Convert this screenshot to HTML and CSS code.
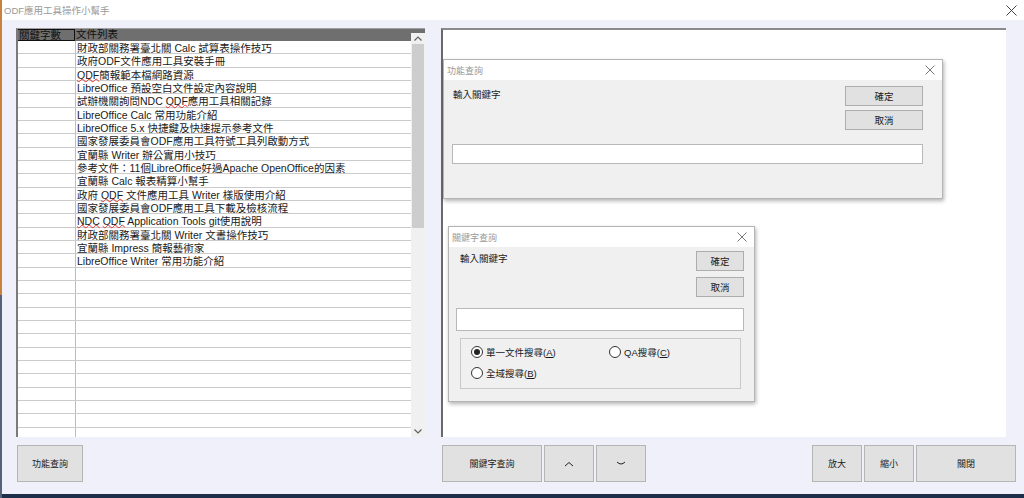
FILE: index.html
```html
<!DOCTYPE html>
<html>
	<head>
		<meta charset="utf-8">
		<title>ODF應用工具操作小幫手</title>
		<link rel="stylesheet" href="styles.css">
	</head>
	<body>
	<div class="app">
		<div class="titlebar">
			<span class="apptitle">ODF應用工具操作小幫手</span>
			<svg class="close" width="11" height="11" viewBox="0 0 11 11"><path d="M0.5 0.5 L10.5 10.5 M10.5 0.5 L0.5 10.5" stroke="#444" stroke-width="1"/></svg>
		</div>
		<div class="main">
			<div class="grid">
				<div class="rows">
					<div class="row head"><div class="c1">關鍵字數</div><div class="c2">文件列表</div></div>
					<div class="row"><div class="c1"></div><div class="c2">財政部關務署臺北關 Calc 試算表操作技巧</div></div>
					<div class="row"><div class="c1"></div><div class="c2">政府ODF文件應用工具安裝手冊</div></div>
					<div class="row"><div class="c1"></div><div class="c2"><u>ODF</u>簡報範本檔網路資源</div></div>
					<div class="row"><div class="c1"></div><div class="c2">LibreOffice 預設空白文件設定內容說明</div></div>
					<div class="row"><div class="c1"></div><div class="c2">試辦機關詢問NDC <u>ODF</u>應用工具相關記錄</div></div>
					<div class="row"><div class="c1"></div><div class="c2">LibreOffice Calc 常用功能介紹</div></div>
					<div class="row"><div class="c1"></div><div class="c2">LibreOffice 5.x 快捷鍵及快速提示參考文件</div></div>
					<div class="row"><div class="c1"></div><div class="c2">國家發展委員會ODF應用工具符號工具列啟動方式</div></div>
					<div class="row"><div class="c1"></div><div class="c2">宜蘭縣 Writer 辦公實用小技巧</div></div>
					<div class="row"><div class="c1"></div><div class="c2">參考文件：11個LibreOffice好過Apache OpenOffice的因素</div></div>
					<div class="row"><div class="c1"></div><div class="c2">宜蘭縣 Calc 報表精算小幫手</div></div>
					<div class="row"><div class="c1"></div><div class="c2">政府 <u>ODF</u> 文件應用工具 Writer 樣版使用介紹</div></div>
					<div class="row"><div class="c1"></div><div class="c2">國家發展委員會ODF應用工具下載及檢核流程</div></div>
					<div class="row"><div class="c1"></div><div class="c2"><u>NDC</u> <u>ODF</u> Application Tools git使用說明</div></div>
					<div class="row"><div class="c1"></div><div class="c2">財政部關務署臺北關 Writer 文書操作技巧</div></div>
					<div class="row"><div class="c1"></div><div class="c2">宜蘭縣 Impress 簡報藝術家</div></div>
					<div class="row"><div class="c1"></div><div class="c2">LibreOffice Writer 常用功能介紹</div></div>
					<div class="row"><div class="c1"></div><div class="c2"></div></div>
					<div class="row"><div class="c1"></div><div class="c2"></div></div>
					<div class="row"><div class="c1"></div><div class="c2"></div></div>
					<div class="row"><div class="c1"></div><div class="c2"></div></div>
					<div class="row"><div class="c1"></div><div class="c2"></div></div>
					<div class="row"><div class="c1"></div><div class="c2"></div></div>
					<div class="row"><div class="c1"></div><div class="c2"></div></div>
					<div class="row"><div class="c1"></div><div class="c2"></div></div>
					<div class="row"><div class="c1"></div><div class="c2"></div></div>
					<div class="row"><div class="c1"></div><div class="c2"></div></div>
					<div class="row"><div class="c1"></div><div class="c2"></div></div>
					<div class="row"><div class="c1"></div><div class="c2"></div></div>
					<div class="row"><div class="c1"></div><div class="c2"></div></div>
				</div>
				<div class="scroll">
					<div class="sbtop"></div>
					<div class="arrow">
						<svg width="8" height="5" viewBox="0 0 8 5"><path d="M0.5 4.5 L4 1 L7.5 4.5" fill="none" stroke="#606060" stroke-width="1.2"/></svg>
					</div>
					<div class="thumb"></div>
					<div class="track"></div>
					<div class="arrow">
						<svg width="8" height="5" viewBox="0 0 8 5"><path d="M0.5 0.5 L4 4 L7.5 0.5" fill="none" stroke="#606060" stroke-width="1.2"/></svg>
					</div>
				</div>
			</div>
			<div class="viewer"></div>

			<div class="dialog dlg1">
				<div class="dtitle"><span>功能查詢</span>
					<svg width="10" height="10" viewBox="0 0 10 10"><path d="M0.5 0.5 L9.5 9.5 M9.5 0.5 L0.5 9.5" stroke="#777" stroke-width="1"/></svg>
				</div>
				<div class="dbody">
					<div class="dtop">
						<div class="label">輸入關鍵字</div>
						<div class="dbtns">
							<div class="btn">確定</div>
							<div class="btn">取消</div>
						</div>
					</div>
					<div class="input"></div>
				</div>
			</div>

			<div class="dialog dlg2">
				<div class="dtitle"><span>關鍵字查詢</span>
					<svg width="10" height="10" viewBox="0 0 10 10"><path d="M0.5 0.5 L9.5 9.5 M9.5 0.5 L0.5 9.5" stroke="#777" stroke-width="1"/></svg>
				</div>
				<div class="dbody">
					<div class="dtop">
						<div class="label">輸入關鍵字</div>
						<div class="dbtns">
							<div class="btn">確定</div>
							<div class="btn">取消</div>
						</div>
					</div>
					<div class="input"></div>
					<div class="group">
						<div class="radio"><span class="dot on"></span><span>單一文件搜尋(<span class="key">A</span>)</span></div>
						<div class="radio"><span class="dot"></span><span>QA搜尋(<span class="key">C</span>)</span></div>
						<div class="radio"><span class="dot"></span><span>全域搜尋(<span class="key">B</span>)</span></div>
					</div>
				</div>
			</div>
		</div>
		<div class="bottom">
			<div class="bleft">
				<div class="bbtn w66">功能查詢</div>
			</div>
			<div class="bmid">
				<div class="bbtn w100">關鍵字查詢</div>
				<div class="bbtn w50">
					<svg width="10" height="6" viewBox="0 0 10 6"><path d="M1 5 L5 1.5 L9 5" fill="none" stroke="#222" stroke-width="1"/></svg>
				</div>
				<div class="bbtn w50">
					<svg width="10" height="6" viewBox="0 0 10 6"><path d="M1 1 Q5 5 9 1" fill="none" stroke="#222" stroke-width="1"/></svg>
				</div>
			</div>
			<div class="bright">
				<div class="bbtn w50">放大</div>
				<div class="bbtn w50">縮小</div>
				<div class="bbtn w100">關閉</div>
			</div>
		</div>
		<div class="taskbar"></div>
	</div>
	</body>
</html>
```

FILE: styles.css
```css
body{
	margin:0px;
	font-family:"Liberation Sans","Noto Sans CJK TC",sans-serif;
	font-size:10.5px;
	color:#1a1a1a;
}
.app{
	width:1024px;
	height:498px;
	display:flex;
	flex-direction:column;
	background-color:#f0f0fa;
	border-left:2px solid #8a8f9c;
	border-image:linear-gradient(#c8823c 0px, #c8823c 295px, #56617a 295px) 1;
	box-sizing:border-box;
	position:relative;
	overflow:hidden;
}
.titlebar{
	height:20px;
	background-color:#ffffff;
	display:flex;
	align-items:center;
	justify-content:space-between;
	padding:0 7px 0 2px;
	flex:none;
}
.apptitle{color:#9a9a9a;font-size:9.5px;}

.main{
	flex:none;
	height:410px;
	padding-top:8px;
	display:flex;
	position:relative;
}
.grid{
	margin-left:14px;
	width:409px;
	height:409px;
	display:flex;
	background-color:#ffffff;
	border-left:2px solid #7a7a7a;
	border-top:1px solid #a0a0a0;
	box-sizing:border-box;
}
.rows{
	flex:auto;
	overflow:hidden;
}
.row{
	display:flex;
	height:13.33px;
	box-sizing:border-box;
	border-bottom:1px solid #cbcbcb;
	line-height:12px;
	padding-top:1px;
}
.c1{
	flex:none;
	width:56px;
	border-right:1px solid #bdbdbd;
	padding-left:1px;
	margin-top:-1px;
}
.c2{
	flex:auto;
	padding-left:1px;
	white-space:nowrap;
}
.row.head{
	background-color:#6f6f6f;
	height:12px;
	line-height:11px;
	padding-top:0;
	border-bottom:none;
	color:#111;
}
.row.head .c1{
	border:1px solid #111;
	border-left:none;
	box-sizing:border-box;
	width:57px;
	margin-top:0;
}
u{
	text-decoration:underline wavy #e53030;
	text-underline-offset:-1px;
	text-decoration-thickness:1px;
	text-decoration-skip-ink:none;
}
.scroll{
	flex:none;
	width:14px;
	display:flex;
	flex-direction:column;
	background-color:#f0f0f0;
}
.sbtop{height:4px;background-color:#6f6f6f;}
.arrow{
	height:11px;
	display:flex;
	align-items:center;
	justify-content:center;
}
.thumb{
	height:184px;
	margin:0 1px;
	background-color:#cdcdcd;
}
.track{flex:auto;}

.viewer{
	margin-left:16px;
	width:565px;
	height:409px;
	background-color:#ffffff;
	border-left:2px solid #6a6a6a;
	border-top:2px solid #8a8a8a;
	box-sizing:border-box;
}

.dialog{
	position:absolute;
	background-color:#f0f0f0;
	border:1px solid #b4b4b4;
	box-shadow:1px 2px 4px rgba(0,0,0,0.3);
	display:flex;
	flex-direction:column;
	font-size:9.5px;
}
.dlg1{left:441px;top:39px;width:498px;height:138px;}
.dlg2{left:446px;top:206px;width:305px;height:174px;}
.dtitle{
	height:20px;
	background-color:#ffffff;
	display:flex;
	align-items:center;
	justify-content:space-between;
	padding:0 7px 0 3px;
	color:#9a9a9a;
	font-size:9px;
}
.dbody{
	flex:auto;
	padding:6px 19px 0 8px;
}
.dtop{
	display:flex;
	justify-content:space-between;
}
.label{padding-top:1px;padding-left:1px;}
.dbtns{
	display:flex;
	flex-direction:column;
	gap:4px;
}
.btn{
	width:78px;
	height:20px;
	box-sizing:border-box;
	border:1px solid #adadad;
	background-color:#e1e1e1;
	display:flex;
	align-items:center;
	justify-content:center;
}
.input{
	margin-top:14px;
	height:18px;
	background-color:#ffffff;
	border:1px solid #b8b8b8;
}
.dlg2 .dbody{padding:4px 10px 0 7px;}
.dlg2 .label{padding-left:4px;padding-top:0;}
.dlg2 .btn{width:48px;height:20px;}
.dlg2 .dbtns{gap:6px;}
.dlg2 .input{margin-top:11px;height:21px;}
.group{
	margin:7px 3px 0 4px;
	height:51px;
	border:1px solid #c8c8c8;
	box-sizing:border-box;
	display:grid;
	grid-template-columns:138px auto;
	align-content:start;
	padding:6px 0 0 10px;
	row-gap:8px;
}
.radio{
	display:flex;
	align-items:center;
	gap:3px;
	height:13px;
}
.dot{
	width:12px;
	height:12px;
	box-sizing:border-box;
	border:1px solid #333;
	border-radius:50%;
	background-color:#ffffff;
	position:relative;
}
.dot.on::after{
	content:"";
	position:absolute;
	left:2px;top:2px;
	width:6px;height:6px;
	border-radius:50%;
	background-color:#222;
}
.key{border-bottom:1px solid #1a1a1a;line-height:9px;display:inline-block;}

.bottom{
	flex:none;
	height:37px;
	margin-top:7px;
	display:flex;
}
.bleft{margin-left:15px;width:409px;}
.bmid{margin-left:16px;display:flex;gap:2px;}
.bright{margin-left:auto;margin-right:8px;display:flex;gap:2px;}
.bbtn{
	height:37px;
	box-sizing:border-box;
	border:1px solid #b5b5b5;
	background-color:#e1e1e1;
	display:flex;
	align-items:center;
	justify-content:center;
	font-size:9px;
}
.w66{width:66px;}
.w50{width:50px;}
.w100{width:100px;}
.taskbar{
	position:absolute;
	left:0;right:0;bottom:0;
	height:4px;
	background-color:#1c2e4a;
}
```
